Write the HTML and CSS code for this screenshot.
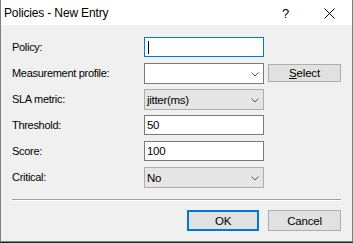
FILE: index.html
```html
<!DOCTYPE html>
<html lang="en">
  <head>
    <meta charset="UTF-8" />
    <title>Policies - New Entry</title>
    <link rel="stylesheet" href="styles.css">
  </head>
  <body>
    <div class="dialog">
      <div class="titlebar">
        <span class="title">Policies - New Entry</span>
        <span class="help">?</span>
        <span class="close">
          <svg width="11" height="11" viewBox="0 0 11 11"><path d="M0.5 0.5L10.5 10.5M10.5 0.5L0.5 10.5" stroke="#000" stroke-width="1" fill="none"/></svg>
        </span>
      </div>
      <div class="content">
        <div class="form">
          <label>Policy:</label>
          <div class="field text focused"><span class="caret"></span></div>
          <span></span>

          <label>Measurement profile:</label>
          <div class="field combo"><span class="value"></span><svg class="chevron" width="8" height="5" viewBox="0 0 8 5"><path d="M0.5 0.5L4 4L7.5 0.5" stroke="#555" fill="none"/></svg></div>
          <button class="btn small"><u>S</u>elect</button>

          <label>SLA metric:</label>
          <div class="field combo locked"><span class="value">jitter(ms)</span><svg class="chevron" width="8" height="5" viewBox="0 0 8 5"><path d="M0.5 0.5L4 4L7.5 0.5" stroke="#555" fill="none"/></svg></div>
          <span></span>

          <label>Threshold:</label>
          <div class="field text"><span class="value">50</span></div>
          <span></span>

          <label>Score:</label>
          <div class="field text"><span class="value">100</span></div>
          <span></span>

          <label>Critical:</label>
          <div class="field combo locked"><span class="value">No</span><svg class="chevron" width="8" height="5" viewBox="0 0 8 5"><path d="M0.5 0.5L4 4L7.5 0.5" stroke="#555" fill="none"/></svg></div>
          <span></span>
        </div>
        <div class="separator"></div>
        <div class="actions">
          <button class="btn default">OK</button>
          <button class="btn">Cancel</button>
        </div>
      </div>
    </div>
  </body>
</html>
```

FILE: styles.css
```css
* { box-sizing: border-box; }
body { margin: 0; background: #262626; font-family: 'Liberation Sans', Arial, sans-serif; color: #000; }

.dialog {
  width: 353px;
  height: 242px;
  border: 1px solid #7f7f7f;
  border-top: none;
  background: #f0f0f0;
  display: flex;
  flex-direction: column;
}

.titlebar {
  height: 25px;
  background: #fff;
  display: flex;
  align-items: center;
  padding-left: 3px;
}
.title { font-size: 12px; letter-spacing: -0.15px; flex: 1; padding-top: 1px; }
.help { font-size: 13px; width: 42px; padding-top: 1px; }
.close { width: 28px; display: flex; padding-top: 1px; }

.content { padding: 12px 11px 0 11px; }

.form {
  display: grid;
  grid-template-columns: 128px 120px 73px;
  grid-auto-rows: 20px;
  column-gap: 4px;
  row-gap: 6px;
  align-items: start;
}
.form label {
  font-size: 11px;
  letter-spacing: -0.3px;
  line-height: 20px;
}

.field {
  height: 20px;
  border: 1px solid #7a7a7a;
  background: #fff;
  display: flex;
  align-items: center;
  padding: 0 4px 0 2px;
  font-size: 11.5px;
  letter-spacing: -0.3px;
}
.field.combo { height: 21px; }
.field.locked { background: #e5e5e5; border-color: #adadad; }
.field.focused { border-color: #0078d7; }
.field .value { flex: 1; }

.caret { width: 1px; height: 13px; background: #000; margin-left: 1px; }

.chevron { margin-top: 1px; }

.btn {
  font-family: inherit;
  font-size: 11.5px;
  letter-spacing: -0.2px;
  color: #000;
  background: #e1e1e1;
  border: 1px solid #adadad;
  height: 21px;
  width: 73px;
  padding: 0;
}
.btn.small { height: 18px; margin-top: 1px; }
.btn.default { border: 2px solid #0078d7; width: 72px; }

.separator {
  margin-top: 12px;
  border-top: 1px solid #a0a0a0;
  border-bottom: 1px solid #fff;
}

.actions {
  display: flex;
  justify-content: flex-end;
  gap: 9px;
  margin-top: 9px;
}
```
